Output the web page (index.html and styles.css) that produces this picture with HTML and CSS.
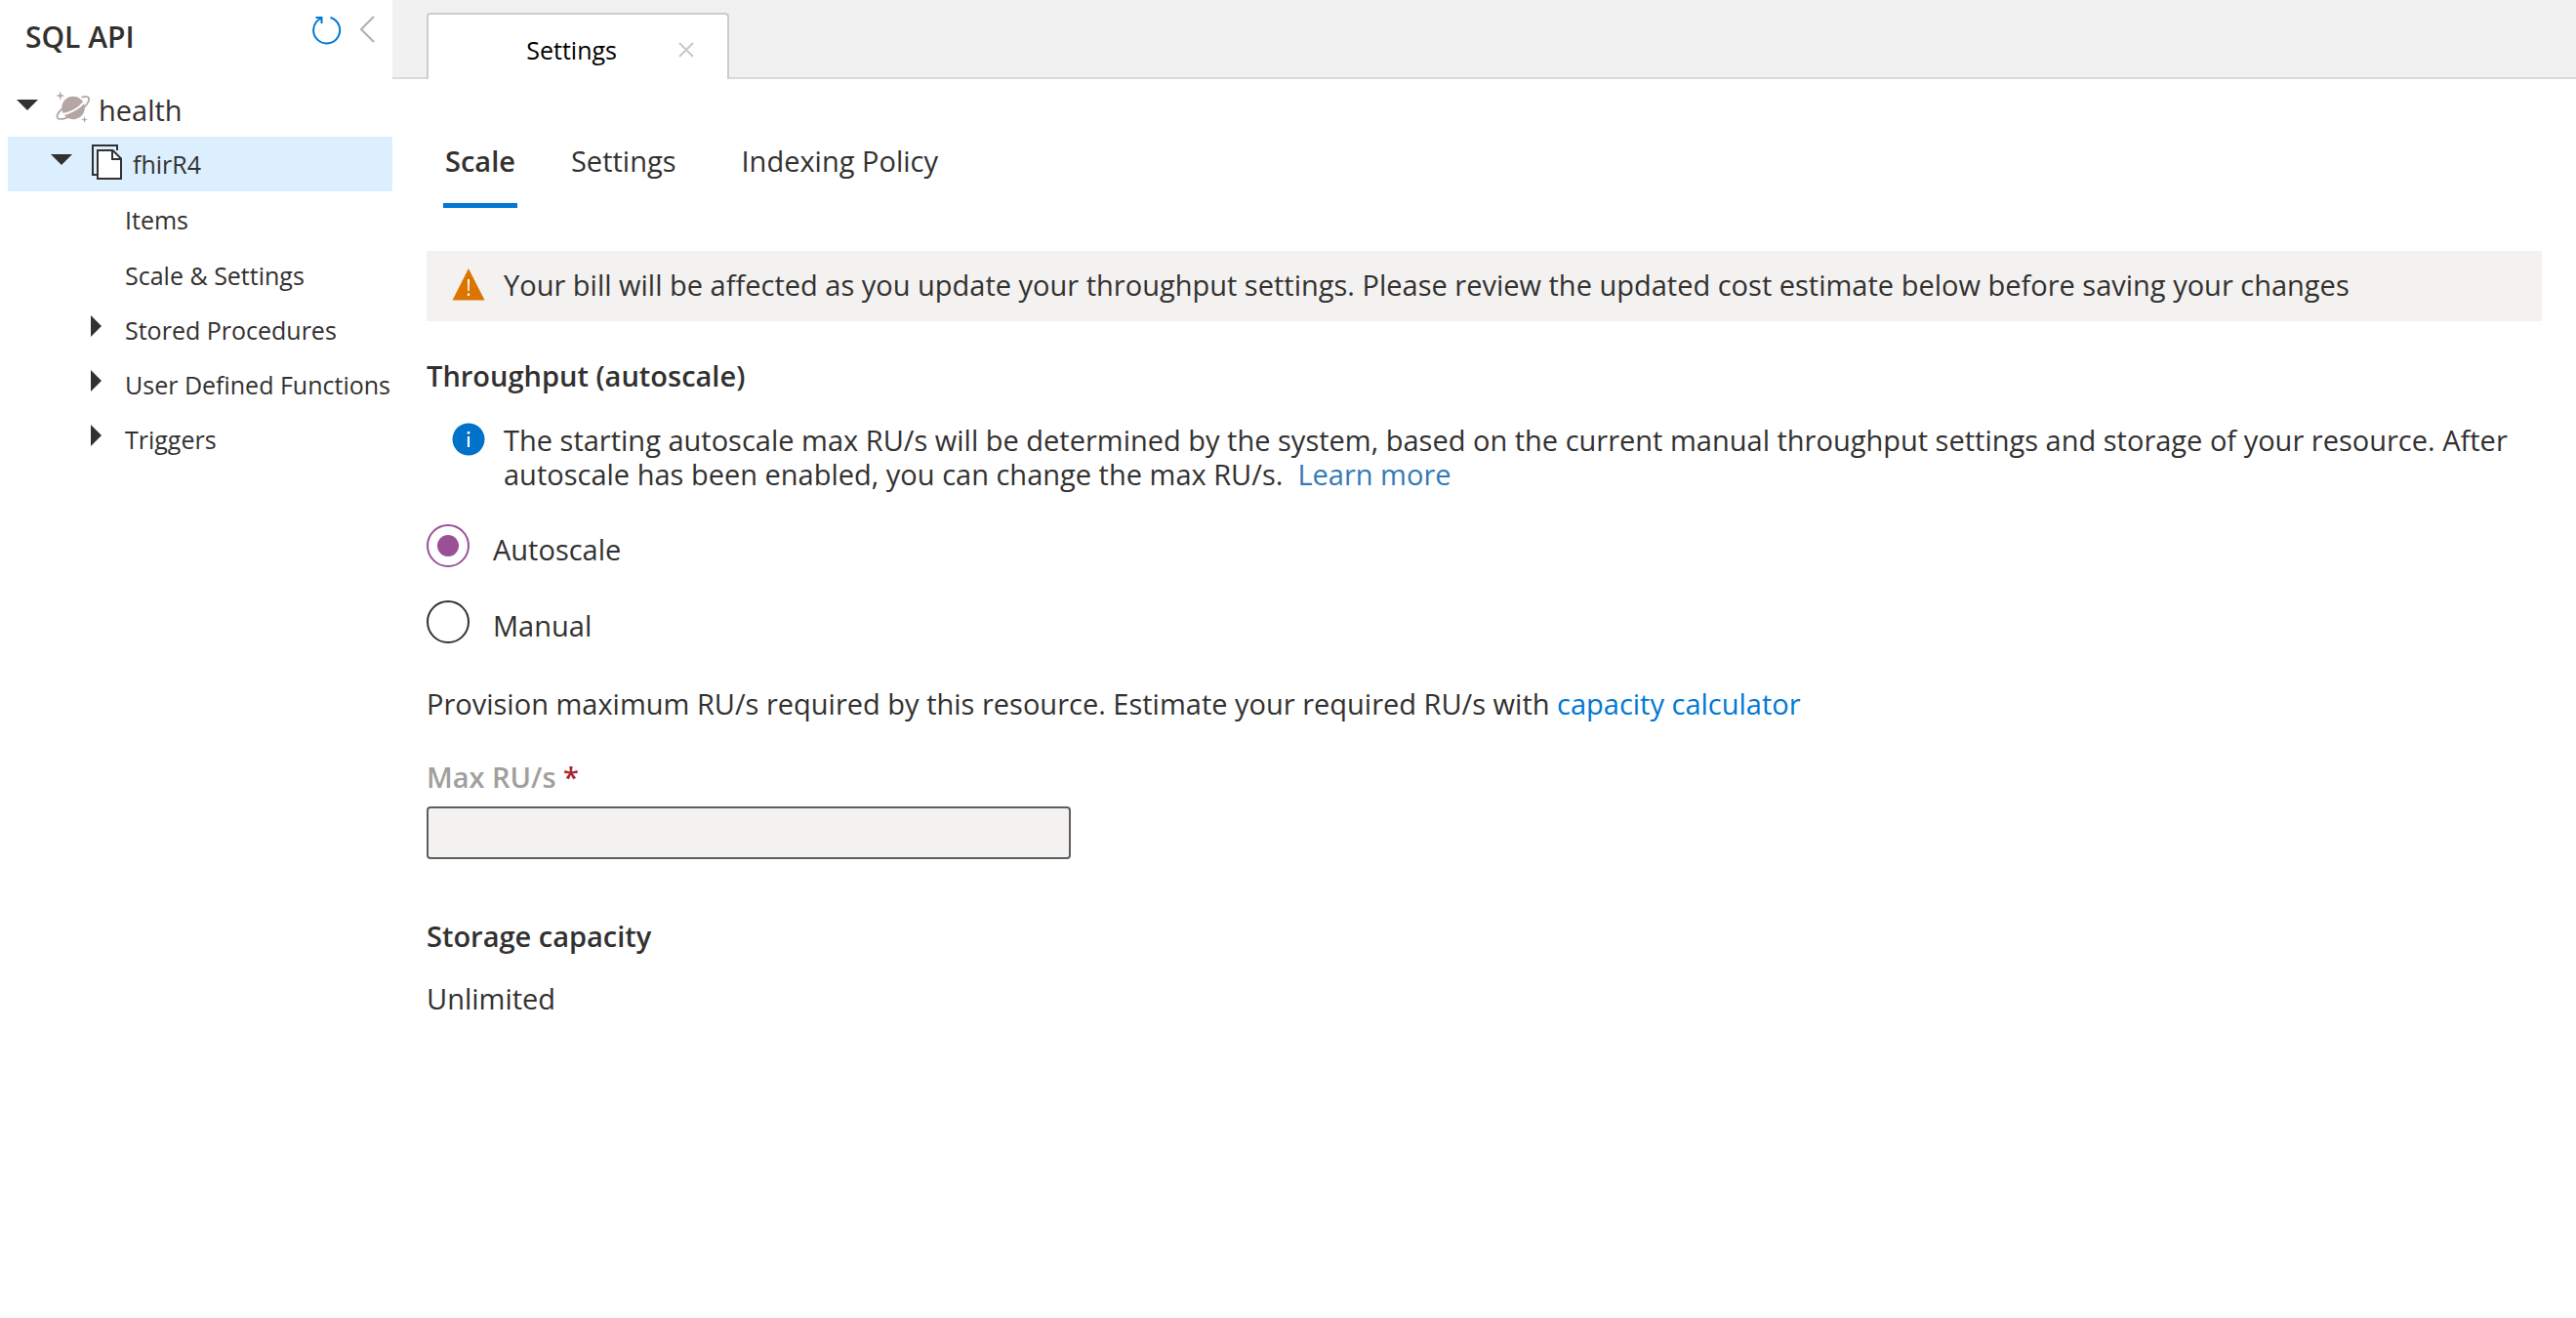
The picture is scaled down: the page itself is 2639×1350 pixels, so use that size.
FILE: index.html
```html
<!DOCTYPE html>
<html lang="en">
<head>
<meta charset="utf-8">
<title>SQL API - Settings</title>
<link rel="stylesheet" href="styles.css">
</head>
<body>
<div class="explorer">
  <aside class="sidebar">
    <header class="sidebar-header">
      <h1 class="sidebar-title">SQL API</h1>
      <button class="icon-button" type="button" aria-label="Refresh">
        <svg width="32" height="32" viewBox="0 0 32 32" fill="none" stroke="#0078d4" stroke-width="2">
          <path d="M19.500 4A13.500 13.500 0 1 1 8.500 5.500L11 4M4.500 4H10.500V10"/>
        </svg>
      </button>
      <button class="icon-button" type="button" aria-label="Collapse tree">
        <svg width="16" height="32" viewBox="0 0 16 32" fill="none" stroke="#b9abab" stroke-width="2">
          <path d="M15 3L2 16L15 29"/>
        </svg>
      </button>
    </header>
    <ul class="tree">
      <li class="node database">
        <svg class="caret-down" width="22" height="11" viewBox="0 0 22 11"><path d="M0 0H22L11 11Z" fill="#323130"/></svg>
        <svg class="planet" width="36" height="34" viewBox="0 0 36 34">
          <circle cx="18" cy="17.500" r="11.800" fill="#b5a5a4"/>
          <path d="M5.500 23.500C8 24.500 15 22.500 20.500 19C26 15.500 29.500 11.500 30 9" fill="none" stroke="#fff" stroke-width="2"/>
          <path d="M6.500 18.500C3 21.800 .8 25.600 1.800 27.600C3.500 30.700 13 28.200 22 22.700C30.500 17.300 35.500 10 34 7.300C33 5.500 30 5.600 26.500 6.600" fill="none" stroke="#b5a5a4" stroke-width="1.800"/>
          <path d="M4.800 0L5.800 4L9.600 5L5.800 6L4.800 10L3.800 6L0 5L3.800 4ZM29.500 26L30.300 28.700L33 29.500L30.300 30.300L29.500 33L28.700 30.300L26 29.500L28.700 28.700Z" fill="#b5a5a4"/>
        </svg>
        <span>health</span>
      </li>
      <li class="node container">
        <svg class="caret-down" width="22" height="11" viewBox="0 0 22 11"><path d="M0 0H22L11 11Z" fill="#323130"/></svg>
        <svg class="pages" width="32" height="36" viewBox="0 0 32 36" fill="none" stroke="#323130" stroke-width="2">
          <path d="M5 31H1V1H26V6"/>
          <path d="M6 35V6H21.500L30 14.500V35Z" fill="#fff"/>
          <path d="M21 6V15H30"/>
        </svg>
        <span>fhirR4</span>
      </li>
      <li class="node leaf"><span>Items</span></li>
      <li class="node leaf"><span>Scale &amp; Settings</span></li>
      <li class="node branch">
        <svg class="caret-right" width="11" height="22" viewBox="0 0 11 22"><path d="M0 0V22L11 11Z" fill="#323130"/></svg>
        <span>Stored Procedures</span>
      </li>
      <li class="node branch">
        <svg class="caret-right" width="11" height="22" viewBox="0 0 11 22"><path d="M0 0V22L11 11Z" fill="#323130"/></svg>
        <span>User Defined Functions</span>
      </li>
      <li class="node branch">
        <svg class="caret-right" width="11" height="22" viewBox="0 0 11 22"><path d="M0 0V22L11 11Z" fill="#323130"/></svg>
        <span>Triggers</span>
      </li>
    </ul>
  </aside>

  <main class="main">
    <div class="tab-strip">
      <div class="tab">
        <span class="tab-title">Settings</span>
        <button class="icon-button" type="button" aria-label="Close tab">
          <svg width="16" height="16" viewBox="0 0 16 16" fill="none" stroke="#c8c8c8" stroke-width="2"><path d="M1 1L15 15M15 1L1 15"/></svg>
        </button>
      </div>
    </div>

    <div class="content">
      <nav class="pivot">
        <button class="pivot-item pivot-selected" type="button">Scale</button>
        <button class="pivot-item" type="button">Settings</button>
        <button class="pivot-item" type="button">Indexing Policy</button>
      </nav>

      <div class="message message-warning">
        <svg width="34" height="34" viewBox="0 0 34 34"><path d="M17 1L33.500 33.500H.5Z" fill="#db7500"/><path d="M16 12H18L17.700 24H16.300ZM15.900 26.500H18.100V29H15.900Z" fill="#fff"/></svg>
        <p>Your bill will be affected as you update your throughput settings. Please review the updated cost estimate below before saving your changes</p>
      </div>

      <h2 class="heading">Throughput (autoscale)</h2>

      <div class="message message-info">
        <svg width="34" height="34" viewBox="0 0 34 34"><circle cx="17" cy="17" r="16.500" fill="#0072c9"/><path d="M15.700 9H18.300V11.600H15.700ZM15.900 14H18.100V25H15.900Z" fill="#fff"/></svg>
        <p>The starting autoscale max RU/s will be determined by the system, based on the current manual throughput settings and storage of your resource. After autoscale has been enabled, you can change the max RU/s. &nbsp;<a class="learn-link" href="#">Learn more</a></p>
      </div>

      <div class="choices" role="radiogroup" aria-label="Throughput">
        <label class="choice"><input type="radio" name="throughput" checked><span>Autoscale</span></label>
        <label class="choice"><input type="radio" name="throughput"><span>Manual</span></label>
      </div>

      <p class="provision">Provision maximum RU/s required by this resource. Estimate your required RU/s with <a href="#">capacity calculator</a></p>

      <div class="field">
        <label class="field-label" for="max-ru">Max RU/s <span class="required">*</span></label>
        <input class="field-input" id="max-ru" type="text" disabled>
      </div>

      <h2 class="heading storage-heading">Storage capacity</h2>
      <p class="storage-value">Unlimited</p>
    </div>
  </main>
</div>
</body>
</html>
```
FILE: styles.css
```css
* {
  box-sizing: border-box;
}

body {
  margin: 0;
  background: #fff;
  color: #323130;
  font-family: "Open Sans", "Noto Sans", sans-serif;
  font-size: 29px;
  line-height: 35px;
}

h1, h2, p, ul {
  margin: 0;
  padding: 0;
}

svg {
  display: block;
  flex: none;
}

a {
  color: #0078d4;
  text-decoration: none;
}

button {
  padding: 0;
  border: 0;
  background: none;
  color: inherit;
  font: inherit;
}

.explorer {
  display: flex;
  min-height: 100vh;
}

/* Resource tree */

.sidebar {
  flex: none;
  width: 402px;
}

.sidebar-header {
  display: flex;
  align-items: flex-start;
  gap: 17px;
  height: 84px;
  padding: 14px 18px 0 26px;
}

.sidebar-title {
  flex: 1;
  padding-top: 6px;
  font-size: 30px;
  font-weight: 600;
}

.tree {
  list-style: none;
}

.node {
  display: flex;
  align-items: center;
  height: 56px;
  font-size: 25px;
  white-space: nowrap;
}

.database {
  padding-left: 17px;
  font-size: 29px;
}

.caret-down {
  margin-bottom: 10px;
}

.caret-right {
  margin-bottom: 8px;
}

.planet {
  margin: 0 8px 4px 18px;
}

.container {
  margin-left: 8px;
  padding-left: 44px;
  background: #dceffe;
}

.pages {
  margin: 0 10px 4px 20px;
}

.leaf {
  height: 57px;
  padding: 2px 0 0 128px;
}

.branch {
  gap: 24px;
  padding-left: 93px;
}

/* Document tabs */

.main {
  flex: 1;
  min-width: 0;
}

.tab-strip {
  display: flex;
  height: 81px;
  padding: 13px 35px 0;
  border-bottom: 2px solid #dadada;
  background: #f1f1f1;
}

.tab {
  display: flex;
  align-items: center;
  justify-content: flex-end;
  gap: 63px;
  width: 310px;
  height: 68px;
  padding: 6px 34px 0 0;
  border: 2px solid #ccc;
  border-bottom: 0;
  border-radius: 4px 4px 0 0;
  background: #fff;
}

.tab-title {
  color: #000;
  font-size: 25px;
}

.content {
  padding: 51px 35px;
}

.pivot {
  display: flex;
  gap: 53px;
  padding: 0 17px;
}

.pivot-item {
  height: 81px;
  padding: 0 12px 11px 2px;
  border-bottom: 5px solid transparent;
}

.pivot-selected {
  padding-right: 2px;
  border-color: #0078d4;
  font-weight: 600;
}

/* Messages */

.message {
  display: flex;
  align-items: flex-start;
  gap: 19px;
  padding-left: 26px;
}

.message-warning {
  margin-top: 44px;
  padding-top: 17px;
  padding-bottom: 20px;
  background: #f3f2f1;
}

.message-info {
  margin-top: 31px;
}

.learn-link {
  color: #337ab7;
}

.heading {
  margin-top: 38px;
  font-size: 29px;
  font-weight: 600;
}

/* Throughput form */

.choices {
  display: flex;
  flex-direction: column;
  gap: 34px;
  margin-top: 34px;
}

.choice {
  display: flex;
  align-items: center;
  gap: 24px;
  height: 44px;
}

.choice span {
  padding-top: 6px;
}

.choice input {
  display: grid;
  place-items: center;
  width: 44px;
  height: 44px;
  margin: 0;
  border: 2px solid #323130;
  border-radius: 50%;
  appearance: none;
}

.choice input:checked {
  border-color: #9b4f96;
}

.choice input:checked::before {
  width: 22px;
  height: 22px;
  border-radius: 50%;
  background: #9b4f96;
  content: "";
}

.provision {
  margin-top: 44px;
}

.field {
  display: flex;
  flex-direction: column;
  gap: 13px;
  max-width: 660px;
  margin-top: 40px;
}

.field-label {
  color: #a19f9d;
  font-weight: 600;
}

.required {
  color: #a4262c;
}

.field-input {
  width: 100%;
  height: 54px;
  padding: 0 16px;
  border: 2px solid #605e5c;
  border-radius: 4px;
  background: #f3f2f1;
  font: inherit;
}

.storage-heading {
  margin-top: 61px;
}

.storage-value {
  margin-top: 29px;
}
```
